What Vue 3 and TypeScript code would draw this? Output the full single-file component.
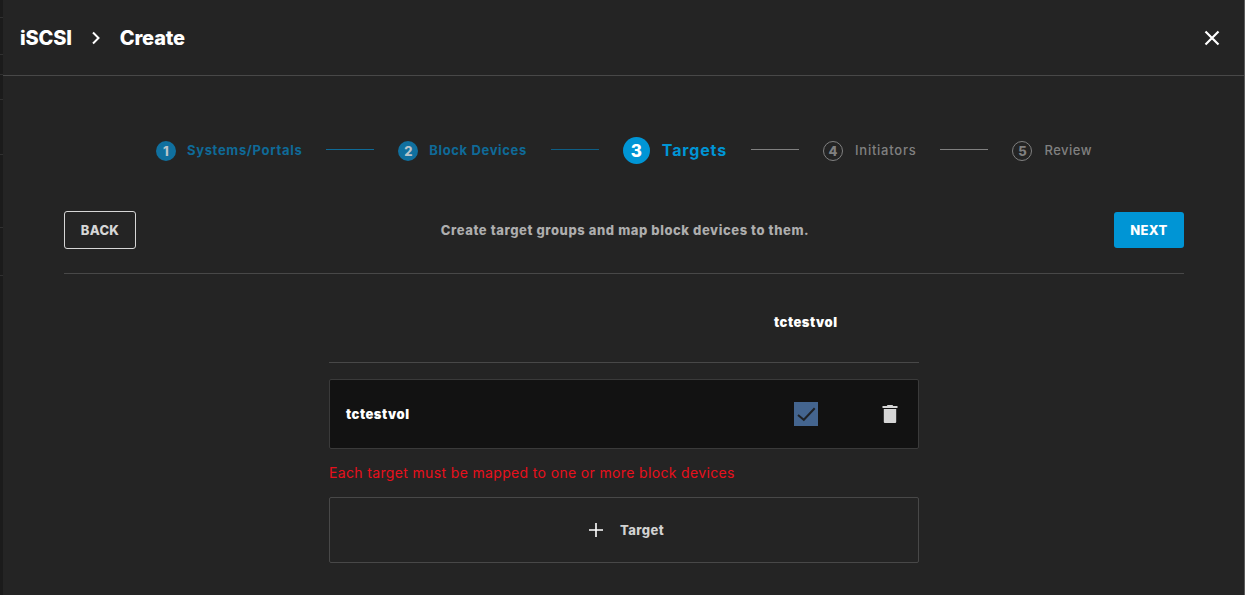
<script setup lang="ts">
interface Step { n: number; label: string; state: 'done' | 'active' | 'todo'; spacing: number }
const steps: Step[] = [
  { n: 1, label: 'Systems/Portals', state: 'done', spacing: 0.68 },
  { n: 2, label: 'Block Devices', state: 'done', spacing: 0.63 },
  { n: 3, label: 'Targets', state: 'active', spacing: 0.85 },
  { n: 4, label: 'Initiators', state: 'todo', spacing: 0.75 },
  { n: 5, label: 'Review', state: 'todo', spacing: 0.5 },
]
</script>

<template>
  <div class="page">
    <aside class="strip">
      <i v-for="h in [18, 37, 20, 25, 55, 73, 48]" :key="h" :style="{ height: h + 'px' }"></i>
    </aside>
    <main class="modal">
      <header class="head">
        <div class="crumbs">
          <span>iSCSI</span>
          <svg class="chev" width="12" height="14" viewBox="0 0 12 14"><path d="M3 1.500 8.500 7 3 12.500" fill="none" stroke="#fff" stroke-width="2"/></svg>
          <span>Create</span>
        </div>
        <svg class="close" width="16" height="16" viewBox="0 0 16 16"><path d="M1.500 1.500l13 13M14.500 1.500l-13 13" stroke="#fff" stroke-width="2.200" fill="none"/></svg>
      </header>
      <section class="body">
        <nav class="stepper">
          <template v-for="(s, i) in steps" :key="s.n">
            <div class="line" :class="steps[i - 1]?.state === 'done' && s.state !== 'todo' ? (s.state === 'active' ? 'l-dim' : 'l-blue') : ''" v-if="i > 0"></div>
            <div class="step" :class="s.state">
              <span class="dot">{{ s.n }}</span>
              <span class="label" :style="{ letterSpacing: s.spacing + 'px' }">{{ s.label }}</span>
            </div>
          </template>
        </nav>
        <div class="actions">
          <button class="btn back">BACK</button>
          <p class="hint">Create target groups and map block devices to them.</p>
          <button class="btn next">NEXT</button>
        </div>
        <div class="content">
          <div class="table-head"><span>tctestvol</span></div>
          <div class="row">
            <span class="name">tctestvol</span>
            <span class="check">
              <svg width="24" height="24" viewBox="0 0 24 24"><path d="M4 13l5.800 4.800L20.700 6.300" fill="none" stroke="#1f2226" stroke-width="2"/></svg>
            </span>
            <svg class="trash" width="16" height="18" viewBox="0 0 16 18"><path d="M5.500 0h5l.7 1H15.500v2H.5V1h4.300z" fill="#d6d6d6"/><path d="M1.800 4h12.400v13a1 1 0 0 1-1 1H2.800a1 1 0 0 1-1-1z" fill="#d6d6d6"/></svg>
          </div>
          <p class="error">Each target must be mapped to one or more block devices</p>
          <button class="add">
            <svg width="16" height="16" viewBox="0 0 16 16"><path d="M8 1v14M1 8h14" stroke="#fff" stroke-width="1.6" fill="none"/></svg>
            <span>Target</span>
          </button>
        </div>
      </section>
    </main>
    <div class="edge"></div>
  </div>
</template>

<style>
html, body { margin: 0; background: #242424; overflow: hidden; }
</style>

<style scoped>
.page {
  display: flex;
  width: 1245px;
  height: 595px;
  overflow: hidden;
  background: #242424;
  font-family: Inter, "Liberation Sans", sans-serif;
}
.strip {
  width: 3px;
  flex: none;
  background: #1b1b1b;
  display: flex;
  flex-direction: column;
}
.strip i { display: block; flex: none; border-bottom: 1px solid #303030; box-sizing: border-box; }
.edge { width: 1px; flex: none; background: #5a5a5a; }
.modal { flex: 1; min-width: 0; display: flex; flex-direction: column; }
.head {
  height: 76px;
  box-sizing: border-box;
  border-bottom: 1px solid #484848;
  display: flex;
  align-items: center;
  justify-content: space-between;
  padding: 0 24px 0 17px;
  color: #fff;
}
.crumbs { display: flex; align-items: center; gap: 18px; font-size: 20px; font-weight: 800; letter-spacing: -0.18px; }
.body { padding: 61px 60px 0 61px; display: flex; flex-direction: column; }
.stepper { display: flex; align-items: center; justify-content: center; gap: 24px; height: 27px; }
.line { width: 48px; height: 1px; background: #808080; margin-top: -2px; }
.line.l-blue { background: #0e6a97; }
.line.l-dim { background: #0e5e85; }
.step { display: flex; align-items: center; gap: 11px; font-size: 13px; font-weight: 600; white-space: nowrap; }
.label { padding-bottom: 2px; }
.dot {
  width: 20px; height: 20px; border-radius: 50%; box-sizing: border-box;
  display: flex; align-items: center; justify-content: center;
  font-size: 13px; font-weight: 800;
}
.done .dot { background: #10709f; color: #b9c4ca; }
.done .label { color: #0f6a98; font-weight: 700; }
.active { gap: 12px; font-size: 16px; font-weight: 700; }
.active .dot { width: 27px; height: 27px; background: #0095d5; color: #fff; font-size: 17px; }
.active .label { color: #0095d5; }
.todo { gap: 12px; }
.todo .dot { border: 1px solid #808080; color: #808080; }
.todo .label { color: #808080; font-weight: 500; }
.actions {
  margin-top: 47px;
  height: 63px;
  box-sizing: border-box;
  padding-bottom: 24px;
  border-bottom: 1px solid #484848;
  display: flex;
  align-items: center;
  justify-content: space-between;
}
.btn {
  font-family: inherit;
  font-size: 13px;
  font-weight: 800;
  letter-spacing: 0.3px;
  border-radius: 3px;
  box-sizing: border-box;
  padding: 0;
  text-transform: uppercase;
}
.back { width: 72px; height: 38px; background: transparent; border: 1px solid #d6d6d6; color: #d6d6d6; }
.next { width: 70px; height: 36px; background: #0095d5; border: 0; color: #fff; }
.hint { margin: 0; color: #aeaeae; font-size: 13px; font-weight: 800; letter-spacing: 0.58px; }
.content { width: 590px; margin: 0 0 0 265px; }
.table-head {
  height: 89px;
  box-sizing: border-box;
  border-bottom: 1px solid #484848;
  padding: 40px 0 0 445px;
  color: #fff;
  font-size: 13px;
  font-weight: 900;
  letter-spacing: 0.5px;
  line-height: 16px;
}
.row {
  margin-top: 16px;
  height: 70px;
  box-sizing: border-box;
  background: #121212;
  border: 1px solid #3a3a3a;
  border-radius: 2px;
  display: flex;
  align-items: center;
  padding-left: 16px;
  color: #fff;
}
.name { width: 448px; font-size: 13px; font-weight: 900; letter-spacing: 0.5px; }
.check { width: 24px; height: 24px; background: #44658f; display: block; }
.check svg { display: block; }
.trash { margin-left: 64px; }
.error { margin: 16px 0 0; height: 16px; line-height: 16px; font-size: 14px; color: #e8101c; letter-spacing: 0.35px; white-space: nowrap; }
.add {
  margin-top: 16px;
  width: 590px;
  height: 66px;
  box-sizing: border-box;
  background: transparent;
  border: 1px solid #484848;
  border-radius: 2px;
  display: flex;
  align-items: center;
  justify-content: center;
  gap: 16px;
  padding: 0 0 0 4px;
  font-family: inherit;
  font-size: 13px;
  font-weight: 800;
  letter-spacing: 0.4px;
  color: #d2d2d2;
}
</style>
